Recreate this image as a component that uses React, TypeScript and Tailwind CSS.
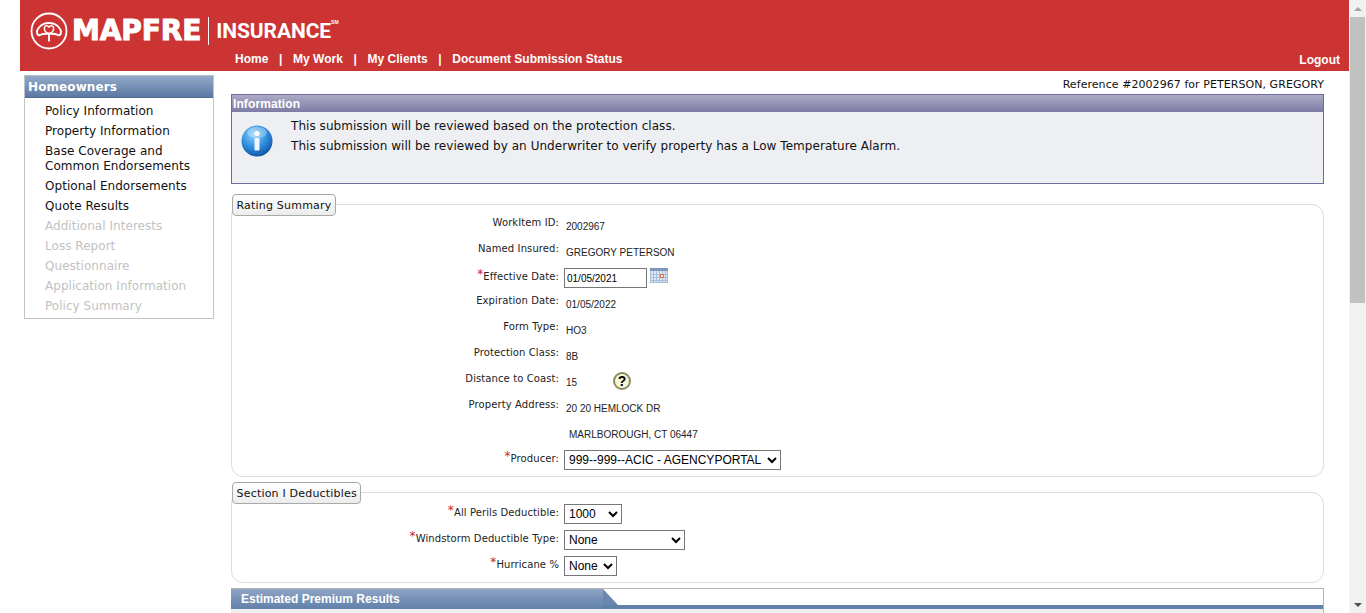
import type { ReactNode } from "react";

const ui = "font-['DejaVu_Sans',sans-serif]";
const arial = "font-['Liberation_Sans',Arial,sans-serif]";

function Logo() {
  return (
    <div className="flex items-center h-[46px] text-white">
      <svg width="38" height="38" viewBox="0 0 38 38" fill="none" stroke="white" className="shrink-0">
        <circle cx="19" cy="19" r="17.500" strokeWidth="1.800" />
        <path d="M9 23.500c-3-1.500-2.500-5 0-8 2.500-3 6-4.500 10-4.500s7.500 1.500 10 4.500c2.500 3 3 6.500 0 8-2.500-1.500-6-2-10-2s-7.500.5-10 2z" strokeWidth="1.900" />
        <path d="M19 22c-3.500-1.500-5-4-4.500-6.500.5-2 3-2.500 4.500-.5 1.500-2 4-1.500 4.500.5.5 2.500-1 5-4.500 6.500z" strokeWidth="1.500" />
        <path d="M19 22v7.500" strokeWidth="1.800" />
      </svg>
      <span className={`${ui} ml-[4px] text-[28px] leading-none font-bold tracking-[-0.1px] [-webkit-text-stroke:1px_white]`}>
        MAPFRE
      </span>
      <span className="ml-[7px] w-px h-[28px] bg-white" />
      <span className="font-['Roboto',sans-serif] ml-[7px] text-[21px] leading-none font-bold tracking-[-0.1px]">INSURANCE</span>
      <span className={`${arial} text-[5px] font-bold self-start mt-[11px]`}>SM</span>
    </div>
  );
}

function Header() {
  const links = ["Home", "My Work", "My Clients", "Document Submission Status"];
  return (
    <header className="ml-[20px] h-[71px] bg-[#cc3333] relative pl-[10px] pt-[8px]">
      <Logo />
      <nav className={`${arial} flex items-center text-white text-[12px] font-bold leading-none ml-[205px] mt-[-1px]`}>
        {links.map((l, i) => (
          <span key={l} className="flex items-center">
            {i > 0 && <span className="mx-[10.700px]">|</span>}
            <span>{l}</span>
          </span>
        ))}
      </nav>
      <a className={`${arial} absolute right-[9px] bottom-[5px] text-white text-[12px] font-bold leading-none`}>Logout</a>
    </header>
  );
}

function Sidebar() {
  const active = ["Policy Information", "Property Information", "Base Coverage and\nCommon Endorsements", "Optional Endorsements", "Quote Results"];
  const disabled = ["Additional Interests", "Loss Report", "Questionnaire", "Application Information", "Policy Summary"];
  return (
    <aside className="w-[190px] h-[244px] ml-[24px] mt-[4px] shrink-0 border border-[#c4c4c4] border-t-[#b5bdc9]">
      <div className={`${ui} h-[22px] bg-gradient-to-b from-[#94a9c7] to-[#5c79a5] text-white text-[12px] tracking-[0.1px] font-bold leading-[22px] pl-[3px] border-b border-[#4f6a92]`}>
        Homeowners
      </div>
      <ul className={`${ui} pl-[20px] pt-[6px] text-[12px] leading-[15px] tracking-[0.04px]`}>
        {active.map((t) => (
          <li key={t} className="text-[#111111] whitespace-pre-line pb-[5px]">{t}</li>
        ))}
        {disabled.map((t) => (
          <li key={t} className="text-[#c2c2c2] pb-[5px]">{t}</li>
        ))}
      </ul>
    </aside>
  );
}

function InfoIcon() {
  return (
    <svg width="32" height="32" viewBox="0 0 32 32" className="shrink-0">
      <defs>
        <radialGradient id="infoBall" cx="40%" cy="30%" r="75%">
          <stop offset="0%" stopColor="#8fd0fb" />
          <stop offset="55%" stopColor="#2f8fe0" />
          <stop offset="100%" stopColor="#0f4f9c" />
        </radialGradient>
      </defs>
      <circle cx="16" cy="16" r="15.500" fill="url(#infoBall)" />
      <ellipse cx="16" cy="7.500" rx="10" ry="5.500" fill="white" opacity="0.3" />
      <circle cx="16" cy="8.500" r="2.600" fill="white" />
      <rect x="13.500" y="13" width="5" height="12.500" rx="1" fill="#eef7fe" />
    </svg>
  );
}

function InfoBox() {
  return (
    <section className="border border-[#6d6a9f] h-[90px] bg-[#eeeff3]">
      <div className={`${arial} h-[17px] bg-gradient-to-b from-[#adabc6] to-[#7d7ba6] text-white text-[12px] font-bold leading-[18px] pl-[1px] tracking-[0.1px]`}>
        Information
      </div>
      <div className="flex pl-[9px] pt-[13px]">
        <InfoIcon />
        <div className={`${ui} ml-[18px] mt-[-9px] text-[12px] leading-[20px] text-[#111111] tracking-[0.05px]`}>
          <p>This submission will be reviewed based on the protection class.</p>
          <p>This submission will be reviewed by an Underwriter to verify property has a Low Temperature Alarm.</p>
        </div>
      </div>
    </section>
  );
}

function Group({ title, children, className }: { title: string; children: ReactNode; className: string }) {
  return (
    <section className={`border border-[#dcdcdc] rounded-[12px] ${className}`}>
      <div
        className={`${ui} w-fit mt-[-11px] mb-[-2px] h-[22px] px-[3.500px] rounded-[4px] border border-[#a9a9a9] bg-gradient-to-b from-white to-[#ececec] text-[11px] leading-[21px] text-[#111111] tracking-[0.2px]`}
      >
        {title}
      </div>
      {children}
    </section>
  );
}

function Row({ label, required, control, children }: { label?: string; required?: boolean; control?: boolean; children: ReactNode }) {
  return (
    <div className="flex h-[26px]">
      <div className={`${ui} w-[327px] text-right text-[10px] text-[#222222] leading-[14px] pt-[2px] shrink-0 tracking-[0.1px]`}>
        {required && <span className="text-[#cc2222] text-[12px] leading-none align-[2px]">*</span>}
        {label}
      </div>
      <div className={`${arial} text-[10px] text-[#222222] leading-[14px] flex items-start ${control ? "ml-[5px]" : "ml-[7px] pt-[6px]"}`}>{children}</div>
    </div>
  );
}

function Select({ value, width }: { value: string; width: string }) {
  return (
    <select
      defaultValue={value}
      className={`${arial} ${width} h-[20px] mt-[2px] border border-[#767676] bg-white text-[12px] text-black rounded-none`}
      style={{ appearance: "auto" }}
    >
      <option>{value}</option>
    </select>
  );
}

function CalendarIcon() {
  return (
    <svg width="18" height="15" viewBox="0 0 18 15" className="ml-[3px] mt-[2px] shrink-0">
      <rect width="18" height="15" fill="#7c97bd" />
      <rect x="0.500" y="3" width="17" height="11.500" fill="#dfe7f4" />
      {[3, 6, 9, 12, 15].map((x) => (
        <rect key={x} x={x} y="3" width="1" height="12" fill="#a9bcd9" />
      ))}
      {[6, 9, 12].map((y) => (
        <rect key={y} x="0" y={y} width="18" height="1" fill="#a9bcd9" />
      ))}
      <rect x="10.500" y="6.500" width="3" height="3" fill="#fff" stroke="#e2704c" />
    </svg>
  );
}

function HelpIcon() {
  return (
    <span className={`${arial} ml-[36px] mt-[-4px] w-[18px] h-[18px] rounded-full border-2 border-[#8b8b5c] bg-[#f8f6da] text-black text-[14px] font-bold leading-[14px] text-center`}>
      ?
    </span>
  );
}

function RatingSummary() {
  return (
    <Group title="Rating Summary" className="mt-[20px] h-[273px]">
      <Row label="WorkItem ID:">2002967</Row>
      <Row label="Named Insured:">GREGORY PETERSON</Row>
      <Row label="Effective Date:" required control>
        <input
          readOnly
          value="01/05/2021"
          className={`${arial} w-[83px] h-[20px] mt-[2px] border border-[#767676] px-[2px] text-[10px] text-black`}
        />
        <CalendarIcon />
      </Row>
      <Row label="Expiration Date:">01/05/2022</Row>
      <Row label="Form Type:">HO3</Row>
      <Row label="Protection Class:">8B</Row>
      <Row label="Distance to Coast:">
        15
        <HelpIcon />
      </Row>
      <Row label="Property Address:">20 20 HEMLOCK DR</Row>
      <Row>
        <span className="ml-[3px]">MARLBOROUGH, CT 06447</span>
      </Row>
      <Row label="Producer:" required control>
        <Select value="999--999--ACIC - AGENCYPORTAL" width="w-[217px]" />
      </Row>
    </Group>
  );
}

function Deductibles() {
  return (
    <Group title="Section I Deductibles" className="mt-[15px] h-[91px]">
      <Row label="All Perils Deductible:" required control>
        <Select value="1000" width="w-[58px]" />
      </Row>
      <Row label="Windstorm Deductible Type:" required control>
        <Select value="None" width="w-[121px]" />
      </Row>
      <Row label="Hurricane %" required control>
        <Select value="None" width="w-[53px]" />
      </Row>
    </Group>
  );
}

function PremiumHeader() {
  return (
    <div className="mt-[5px] border-t border-r border-[#b5b5b5] h-[30px]">
      <div className="h-[16px] flex">
        <div className={`${arial} w-[372px] bg-gradient-to-b from-[#8ea4c4] to-[#6180aa] text-white text-[12px] font-bold leading-[20px] pl-[10px] h-[20px] shrink-0`}>
          Estimated Premium Results
        </div>
        <svg width="15" height="16" viewBox="0 0 15 16" className="shrink-0" aria-hidden>
          <polygon points="0,0 0,16 15,16" fill="#6a87af" />
        </svg>
      </div>
      <div className="h-[4px] ml-[372px] bg-[#6180aa]" />
      <div className="h-[8px] bg-[#efefef]" />
    </div>
  );
}

function Scrollbar() {
  return (
    <div className="w-[17px] h-full bg-[#f1f1f1] shrink-0 flex flex-col items-center">
      <div className="h-[17px] flex items-center justify-center">
        <div className="w-0 h-0 border-x-[4px] border-x-transparent border-b-[4px] border-b-[#a3a3a3]" />
      </div>
      <div className="w-[15px] h-[286px] bg-[#c1c1c1]" />
      <div className="flex-1" />
      <div className="h-[17px] flex items-center justify-center">
        <div className="w-0 h-0 border-x-[4px] border-x-transparent border-t-[4px] border-t-[#505050]" />
      </div>
    </div>
  );
}

export default function App() {
  return (
    <div className="flex h-[613px] w-[1366px] overflow-hidden bg-white">
      <div className="w-[1349px] shrink-0">
        <Header />
        <div className="flex">
          <Sidebar />
          <main className="ml-[17px] w-[1093px]">
            <div className={`${ui} h-[23px] text-right text-[11px] leading-[27px] text-[#111111] tracking-[0.06px]`}>
              Reference #2002967 for PETERSON, GREGORY
            </div>
            <InfoBox />
            <RatingSummary />
            <Deductibles />
            <PremiumHeader />
          </main>
        </div>
      </div>
      <Scrollbar />
    </div>
  );
}
